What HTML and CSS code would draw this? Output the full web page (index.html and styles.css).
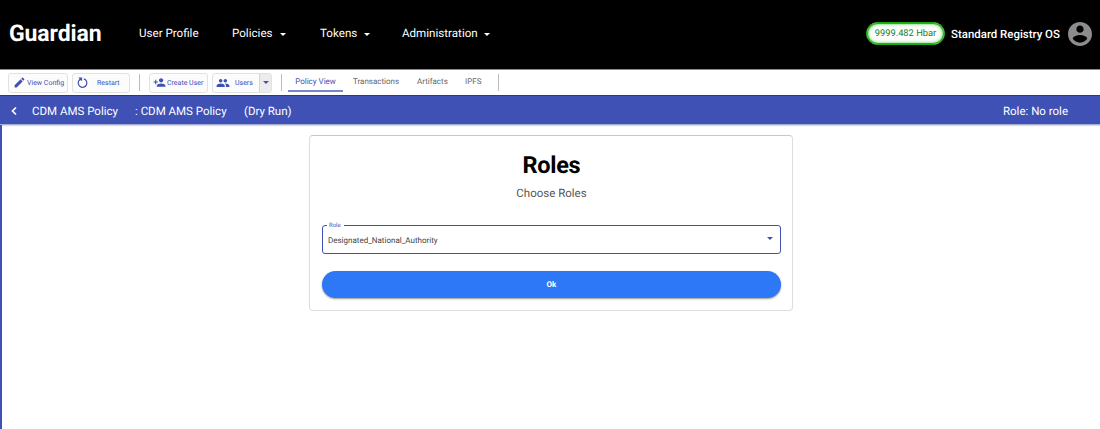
FILE: index.html
```html
<!DOCTYPE html>
<html lang="en">
<head>
<meta charset="utf-8">
<title>Guardian</title>
<link rel="stylesheet" href="styles.css">
</head>
<body>
<header class="header">
  <div class="brand">Guardian</div>
  <nav class="menu">
    <a class="menu-item profile"><span class="label">User Profile</span></a>
    <a class="menu-item policies"><span class="label">Policies</span><svg class="caret" viewBox="0 0 6 3"><path d="M0 0h6L3 3z"/></svg></a>
    <a class="menu-item tokens"><span class="label">Tokens</span><svg class="caret" viewBox="0 0 6 3"><path d="M0 0h6L3 3z"/></svg></a>
    <a class="menu-item administration"><span class="label">Administration</span><svg class="caret" viewBox="0 0 6 3"><path d="M0 0h6L3 3z"/></svg></a>
  </nav>
  <div class="account">
    <span class="balance">9999.482 Hbar</span>
    <span class="user-name">Standard Registry OS</span>
    <svg class="avatar" viewBox="2 2 20 20"><path d="M12 2C6.48 2 2 6.48 2 12s4.48 10 10 10 10-4.48 10-10S17.52 2 12 2zm0 3c1.66 0 3 1.34 3 3s-1.34 3-3 3-3-1.34-3-3 1.34-3 3-3zm0 14.2c-2.5 0-4.71-1.28-6-3.22.03-1.99 4-3.08 6-3.08 1.99 0 5.97 1.09 6 3.08-1.29 1.94-3.5 3.22-6 3.22z"/></svg>
  </div>
</header>
<div class="toolbar">
  <button class="tool view-config"><svg viewBox="0 0 24 24"><path d="M3 17.25V21h3.75L17.81 9.94l-3.75-3.75L3 17.25zM20.71 7.04c.39-.39.39-1.02 0-1.41l-2.34-2.34c-.39-.39-1.02-.39-1.41 0l-1.83 1.83 3.75 3.75 1.83-1.83z"/></svg><span>View Config</span></button>
  <button class="tool restart"><svg viewBox="0 0 12 12"><path class="arc" d="M3.200 3.600A4 4 0 1 0 7.200 2.600"/><path d="M2 1.300H5.600V4.900L4.400 3.700 3.500 4.500 2.600 3.700 3.300 2.600z"/></svg><span>Restart</span></button>
  <i class="divider first"></i>
  <button class="tool create-user"><svg viewBox="0 0 24 24"><path d="M15 12c2.21 0 4-1.79 4-4s-1.79-4-4-4-4 1.79-4 4 1.79 4 4 4zm-9-2V7H4v3H1v2h3v3h2v-3h3v-2H6zm9 4c-2.67 0-8 1.34-8 4v2h16v-2c0-2.66-5.33-4-8-4z"/></svg><span>Create User</span></button>
  <button class="tool users"><svg viewBox="0 0 24 24"><path d="M16 11c1.66 0 2.99-1.34 2.99-3S17.66 5 16 5c-1.66 0-3 1.34-3 3s1.34 3 3 3zm-8 0c1.66 0 2.99-1.34 2.99-3S9.66 5 8 5C6.34 5 5 6.34 5 8s1.34 3 3 3zm0 2c-2.33 0-7 1.17-7 3.5V19h14v-2.500C15 14.170 10.330 13 8 13zm8 0c-.29 0-.62.02-.97.05 1.160.840 1.970 1.970 1.970 3.450V19h6v-2.500c0-2.330-4.670-3.500-7-3.500z"/></svg><span>Users</span><b class="split"><i></i></b></button>
  <i class="divider second"></i>
  <nav class="tabs">
    <a class="tab active">Policy View</a>
    <a class="tab transactions">Transactions</a>
    <a class="tab artifacts">Artifacts</a>
    <a class="tab ipfs">IPFS</a>
  </nav>
  <i class="divider third"></i>
</div>
<div class="policy-bar">
  <svg class="back" viewBox="0 0 6 10"><path d="M5 1.500L1.500 5 5 8.500"/></svg>
  <span class="policy-name">CDM AMS Policy</span>
  <span class="policy-topic">: CDM AMS Policy</span>
  <span class="policy-mode">(Dry Run)</span>
  <span class="policy-role">Role: No role</span>
</div>
<main class="content">
  <section class="card">
    <h1>Roles</h1>
    <p>Choose Roles</p>
    <fieldset class="select">
      <legend>Role</legend>
      <span>Designated_National_Authority</span>
      <svg viewBox="0 0 6 3"><path d="M0 0h6L3 3z"/></svg>
    </fieldset>
    <button class="ok">Ok</button>
  </section>
</main>
</body>
</html>
```
FILE: styles.css
```css
* { box-sizing: border-box; }
body {
  margin: 0;
  height: 429px;
  display: flex;
  flex-direction: column;
  overflow: hidden;
  font-family: Roboto, sans-serif;
  text-rendering: geometricPrecision;
  background: #fff;
}
button { font-family: inherit; margin: 0; text-rendering: inherit; }
.header {
  height: 70px;
  flex: none;
  display: flex;
  align-items: center;
  background: #000;
  border-bottom: 1px solid #8a8a8a;
  color: #fff;
  padding: 0 8px 2px 9px;
}
.brand { width: 130px; font-size: 23px; font-weight: 700; letter-spacing: -0.1px; }
.menu { display: flex; font-size: 11.6px; padding-bottom: 1px; }
.menu-item { display: flex; align-items: center; white-space: nowrap; }
.profile { width: 93px; }
.policies { width: 88px; }
.tokens { width: 82px; }
.policies .label { width: 48px; }
.tokens .label { width: 44px; }
.administration .label { width: 82px; }
.caret { width: 6px; height: 3px; fill: #fff; margin-top: 2px; }
.account { margin-left: auto; display: flex; align-items: center; }
.balance {
  width: 79px;
  height: 23px;
  line-height: 22px;
  border: 1px solid #17a80d;
  border-radius: 12px;
  background: #fff;
  box-shadow: inset 0 0 1px 1px #17a80d, inset 0 0 5px #4cc33f;
  color: #1a7d1a;
  font-size: 9.3px;
  text-align: center;
  white-space: nowrap;
}
.user-name { width: 117px; margin-left: 6px; font-size: 11.45px; font-weight: 500; white-space: nowrap; }
.avatar { width: 24px; height: 24px; fill: #8c8c8c; }
.toolbar {
  height: 25px;
  flex: none;
  display: flex;
  align-items: center;
  padding: 0 0 0 8px;
}
.tool {
  height: 20px;
  display: flex;
  align-items: center;
  padding: 0;
  border: 1px solid #e2e2e2;
  border-radius: 3px;
  background: #fcfcfc;
  color: #3f51b5;
  font-size: 7px;
  white-space: nowrap;
}
.tool svg { width: 13px; height: 13px; fill: #3f51b5; flex: none; }
.tool .arc { fill: none; stroke: #3f51b5; stroke-width: 1.1; }
.view-config { width: 60px; padding-left: 4px; }
.view-config span { margin-left: 1px; }
.restart { width: 58px; margin-left: 4px; padding-left: 3px; }
.restart span { margin-left: 8px; }
.create-user { width: 59px; padding-left: 3px; }
.create-user span { margin-left: 1px; }
.users { width: 60px; margin-left: 4px; padding-left: 3px; }
.users svg { width: 14px; height: 14px; }
.users span { margin-left: 5px; }
.split {
  width: 12px;
  height: 18px;
  margin-left: auto;
  display: flex;
  align-items: center;
  justify-content: center;
  border-left: 1px solid #d5d5d5;
  background: #ececec;
}
.split i { border: 3px solid transparent; border-top: 3px solid #3f51b5; border-bottom: 0; }
.divider { width: 1px; height: 17px; background: #bbb; flex: none; }
.first { margin: 0 9px; }
.second { margin: 0 6px 0 9px; }
.tabs { display: flex; font-size: 8px; color: #666; align-self: stretch; }
.tab { height: 22px; line-height: 24px; white-space: nowrap; }
.active { width: 55px; text-align: center; color: #3f51b5; border-bottom: 2px solid #7986cb; }
.transactions { width: 64px; margin-left: 10px; }
.artifacts { width: 48px; }
.ipfs { width: 33px; }
.policy-bar {
  height: 30px;
  flex: none;
  display: flex;
  align-items: center;
  padding: 1px 32px 0 11px;
  background: #3f51b5;
  border-top: 1px solid #303a66;
  border-bottom: 1px solid #a5aed5;
  box-shadow: 0 1px 1px #ddd;
  color: #fff;
  font-size: 11.5px;
  white-space: nowrap;
}
.back { width: 6px; height: 10px; fill: none; stroke: #fff; stroke-width: 1.7; }
.policy-name { width: 103px; margin-left: 15px; }
.policy-topic { width: 109px; }
.policy-role { margin-left: auto; }
.content { flex: 1; border-left: 2px solid #3f51b5; padding: 10px 0 0 307px; }
.card {
  width: 484px;
  height: 176px;
  border: 1px solid #dedede;
  border-top-color: #c8c8c8;
  border-radius: 4px;
  padding: 0 11px 0 12px;
}
.card h1 { margin: 15px 0 0; font-size: 23.5px; line-height: 28px; font-weight: 700; letter-spacing: -0.3px; text-align: center; }
.card p { margin: 5px 0 0; font-size: 11.5px; line-height: 18px; color: #555; text-align: center; }
.select {
  height: 32px;
  margin: 20px 0 0;
  padding: 0 7px 1px 5px;
  display: flex;
  align-items: center;
  justify-content: space-between;
  border: 1px solid #3f51b5;
  border-radius: 3px;
  font-size: 8px;
  color: #444;
}
.select legend { padding: 1px 3px 0 2px; margin-left: -1px; font-size: 6px; line-height: 6px; color: #3f51b5; }
.select svg { width: 6px; height: 3px; fill: #3f51b5; margin-bottom: 4px; }
.ok {
  display: block;
  width: 100%;
  height: 27px;
  margin-top: 17px;
  border: 0;
  border-radius: 14px;
  background: #2c78f7;
  box-shadow: 0 1px 2px #999;
  color: #fff;
  font-size: 8px;
  font-weight: 700;
}
```
